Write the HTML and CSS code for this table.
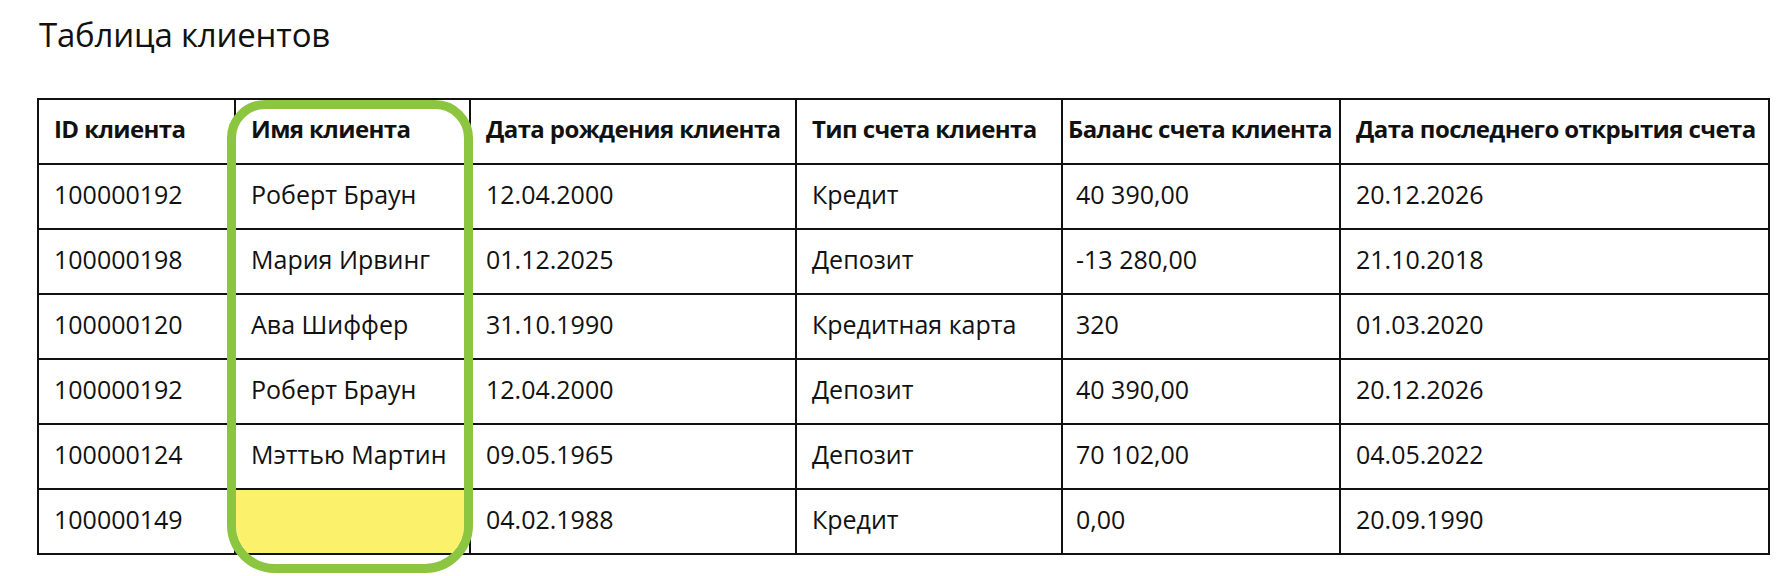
FILE: index.html
```html
<!DOCTYPE html>
<html lang="ru">
<head>
<meta charset="utf-8">
<title>Таблица клиентов</title>
<link rel="stylesheet" href="styles.css">
</head>
<body>
<div class="page">
  <h1 class="title">Таблица клиентов</h1>
  <div class="table-wrap">
    <table class="clients">
      <colgroup>
        <col class="c1"><col class="c2"><col class="c3"><col class="c4"><col class="c5"><col class="c6">
      </colgroup>
      <thead>
        <tr>
          <th>ID клиента</th>
          <th>Имя клиента</th>
          <th>Дата рождения клиента</th>
          <th>Тип счета клиента</th>
          <th class="bal">Баланс счета клиента</th>
          <th>Дата последнего открытия счета</th>
        </tr>
      </thead>
      <tbody>
        <tr><td>100000192</td><td>Роберт Браун</td><td>12.04.2000</td><td>Кредит</td><td class="bal">40 390,00</td><td>20.12.2026</td></tr>
        <tr><td>100000198</td><td>Мария Ирвинг</td><td>01.12.2025</td><td>Депозит</td><td class="bal">-13 280,00</td><td>21.10.2018</td></tr>
        <tr><td>100000120</td><td>Ава Шиффер</td><td>31.10.1990</td><td>Кредитная карта</td><td class="bal">320</td><td>01.03.2020</td></tr>
        <tr><td>100000192</td><td>Роберт Браун</td><td>12.04.2000</td><td>Депозит</td><td class="bal">40 390,00</td><td>20.12.2026</td></tr>
        <tr><td>100000124</td><td>Мэттью Мартин</td><td>09.05.1965</td><td>Депозит</td><td class="bal">70 102,00</td><td>04.05.2022</td></tr>
        <tr><td>100000149</td><td class="empty"></td><td>04.02.1988</td><td>Кредит</td><td class="bal">0,00</td><td>20.09.1990</td></tr>
      </tbody>
    </table>
    <div class="highlight"><div class="highlight-fill"></div></div>
  </div>
</div>
</body>
</html>
```
FILE: styles.css
```css
html, body {
  margin: 0;
  padding: 0;
  background: #ffffff;
}
body {
  min-height: 576px;
}
.page {
  padding: 0 0 30px 37px;
  font-family: "Open Sans", "Noto Sans", sans-serif;
  color: #111;
}
.title {
  margin: 0;
  padding: 13px 0 0 2px;
  font-size: 33px;
  font-weight: 400;
  line-height: 44px;
  height: 98px;
  box-sizing: border-box;
  letter-spacing: -0.2px;
}
.table-wrap {
  position: relative;
  width: 1731px;
}
.clients {
  border-collapse: collapse;
  table-layout: fixed;
  width: 1731px;
  border: 2px solid #111;
}
.c1 { width: 197px; }
.c2 { width: 235px; }
.c3 { width: 326px; }
.c4 { width: 266px; }
.c5 { width: 278px; }
.c6 { width: 429px; }
.clients th,
.clients td {
  border: 2px solid #111;
  height: 57px;
  padding: 0 0 6px 15px;
  text-align: left;
  vertical-align: middle;
  white-space: nowrap;
  overflow: visible;
  font-size: 25px;
  line-height: 30px;
}
.clients th {
  font-weight: 700;
  font-size: 24px;
  letter-spacing: -0.6px;
}
.clients th.bal {
  padding-left: 5px;
}
.clients td.bal {
  padding-left: 13px;
}
.highlight {
  position: absolute;
  left: 190px;
  top: 2px;
  width: 246px;
  height: 473px;
  box-sizing: border-box;
  border: 9px solid #8cc540;
  border-radius: 38px 38px 48px 48px;
  overflow: hidden;
  pointer-events: none;
}
.highlight-fill {
  position: absolute;
  left: 0;
  right: 0;
  top: 381px;
  height: 63px;
  background: #fbf16a;
}
```
